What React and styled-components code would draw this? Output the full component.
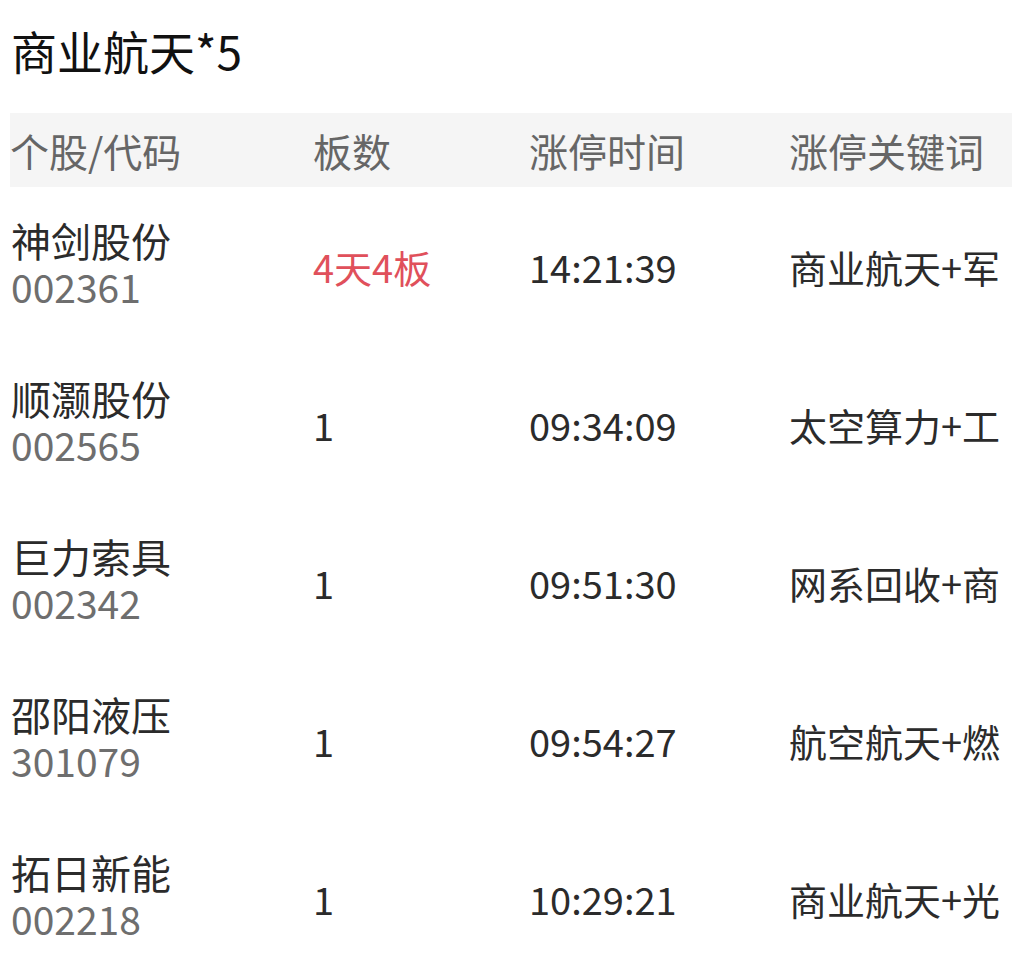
import React from 'react';
import styled, { createGlobalStyle } from 'styled-components';

const GlobalStyle = createGlobalStyle`
  html, body {
    margin: 0;
    padding: 0;
    background: #ffffff;
    font-family: "Noto Sans CJK SC", "Noto Sans", sans-serif;
  }
`;

const Page = styled.div`
  width: 1012px;
  height: 963px;
  overflow: hidden;
  padding-left: 10px;
  box-sizing: border-box;
`;

const Title = styled.h1`
  margin: 0;
  height: 113px;
  display: flex;
  align-items: center;
  padding: 0 0 14px 1px;
  box-sizing: border-box;
  font-size: 46px;
  font-weight: 400;
  color: #111;
`;

const Row = styled.div`
  display: grid;
  grid-template-columns: 303px 216px 260px 1fr;
  align-items: center;
  height: ${(p) => (p.header ? '74px' : '158px')};
  background: ${(p) => (p.header ? '#f5f5f5' : 'transparent')};
`;

const HeadCell = styled.div`
  font-size: 39px;
  color: #666;
  white-space: nowrap;
  overflow: hidden;
`;

const Cell = styled.div`
  font-size: 38px;
  color: ${(p) => (p.red ? '#e0505b' : '#2b2b2b')};
  white-space: nowrap;
  overflow: hidden;
`;

const Stock = styled.div`
  display: flex;
  flex-direction: column;
  padding-left: 1px;
  margin-top: -6px;
`;

const Name = styled.span`
  font-size: 40px;
  line-height: 46px;
  color: #2b2b2b;
`;

const Code = styled.span`
  font-size: 39px;
  line-height: 46px;
  color: #6e6e6e;
`;

const stocks = [
  { name: '神剑股份', code: '002361', boards: '4天4板', hot: true, time: '14:21:39', words: '商业航天+军' },
  { name: '顺灏股份', code: '002565', boards: '1', time: '09:34:09', words: '太空算力+工' },
  { name: '巨力索具', code: '002342', boards: '1', time: '09:51:30', words: '网系回收+商' },
  { name: '邵阳液压', code: '301079', boards: '1', time: '09:54:27', words: '航空航天+燃' },
  { name: '拓日新能', code: '002218', boards: '1', time: '10:29:21', words: '商业航天+光' },
];

const App = () => (
  <Page>
    <GlobalStyle />
    <Title>商业航天*5</Title>
    <Row header>
      <HeadCell>个股/代码</HeadCell>
      <HeadCell>板数</HeadCell>
      <HeadCell>涨停时间</HeadCell>
      <HeadCell>涨停关键词</HeadCell>
    </Row>
    {stocks.map((s) => (
      <Row key={s.code}>
        <Stock>
          <Name>{s.name}</Name>
          <Code>{s.code}</Code>
        </Stock>
        <Cell red={s.hot}>{s.boards}</Cell>
        <Cell>{s.time}</Cell>
        <Cell>{s.words}</Cell>
      </Row>
    ))}
  </Page>
);

export default App;
